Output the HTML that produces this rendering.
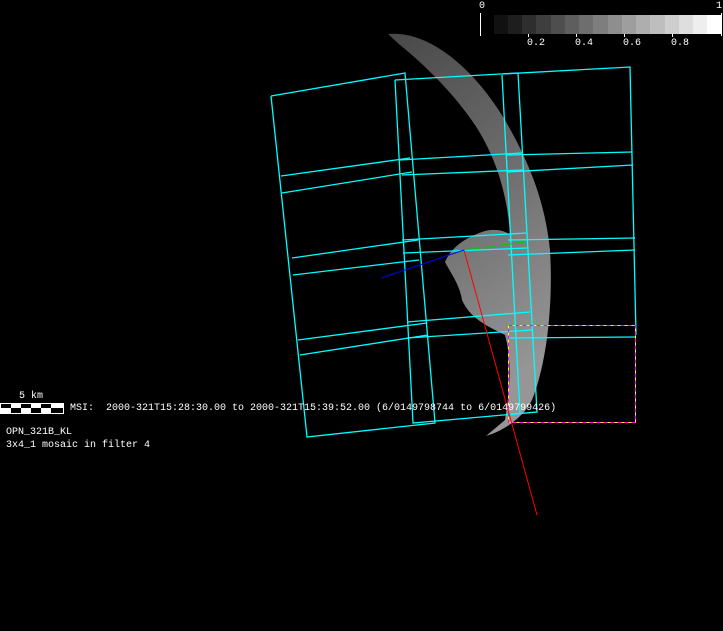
<!DOCTYPE html>
<html><head><style>
html,body{margin:0;padding:0;background:#000;width:723px;height:631px;overflow:hidden}
.t{position:absolute;color:#fff;font-family:"Liberation Mono",monospace;font-size:10px;line-height:12px;white-space:pre}
</style></head><body>
<svg width="723" height="631" style="position:absolute;left:0;top:0">
<defs><linearGradient id="g" x1="0" y1="0" x2="0.3" y2="1">
<stop offset="0" stop-color="#555"/><stop offset="0.5" stop-color="#808080"/><stop offset="1" stop-color="#b0b0b0"/></linearGradient></defs>
<g>
<rect x="494" y="15" width="15" height="19" fill="#111"/><rect x="508" y="15" width="15" height="19" fill="#1e1e1e"/>
<rect x="522" y="15" width="15" height="19" fill="#2e2e2e"/><rect x="536" y="15" width="15" height="19" fill="#3e3e3e"/>
<rect x="551" y="15" width="15" height="19" fill="#4e4e4e"/><rect x="565" y="15" width="15" height="19" fill="#5e5e5e"/>
<rect x="579" y="15" width="15" height="19" fill="#6e6e6e"/><rect x="593" y="15" width="15" height="19" fill="#7e7e7e"/>
<rect x="608" y="15" width="15" height="19" fill="#8e8e8e"/><rect x="622" y="15" width="15" height="19" fill="#9e9e9e"/>
<rect x="636" y="15" width="15" height="19" fill="#aeaeae"/><rect x="650" y="15" width="15" height="19" fill="#bebebe"/>
<rect x="665" y="15" width="15" height="19" fill="#cecece"/><rect x="679" y="15" width="15" height="19" fill="#dedede"/>
<rect x="693" y="15" width="15" height="19" fill="#eee"/><rect x="707" y="15" width="15" height="19" fill="#fff"/>
<line x1="480.5" y1="13" x2="480.5" y2="36" stroke="#fff"/><line x1="721.5" y1="13" x2="721.5" y2="36" stroke="#fff"/>
<g stroke="#fff"><line x1="528.5" y1="34" x2="528.5" y2="37"/><line x1="576.5" y1="34" x2="576.5" y2="37"/><line x1="624.5" y1="34" x2="624.5" y2="37"/><line x1="672.5" y1="34" x2="672.5" y2="37"/></g>
</g>
<path d="M388,34 C430,30 475,70 505,120 C528,160 545,200 550,250 C553,300 548,360 532,400 C522,420 500,432 486,436 L505,420 C510,390 512,360 505,335 C485,325 470,318 462,300 C460,285 450,272 445,262 C452,245 470,236 482,232 C492,228 505,230 510,235 C508,200 498,160 475,125 C455,95 425,65 400,45 Z" fill="url(#g)" opacity="0.85"/>
<g fill="none" stroke="#0ff" stroke-width="1.3">
<polyline points="271,96 405,73 435,423 307,437 271,96"/>
<line x1="281" y1="176" x2="410" y2="158"/><line x1="282" y1="193" x2="412" y2="172"/>
<line x1="292" y1="258" x2="418" y2="240"/><line x1="293" y1="275" x2="419" y2="260"/>
<line x1="298" y1="340" x2="427" y2="323"/><line x1="300" y1="355" x2="428" y2="335"/>
<polyline points="395,80 518,73 537,412 413,423 395,80"/>
<line x1="502" y1="75" x2="520" y2="413"/>
<line x1="400" y1="160" x2="522" y2="153"/><line x1="402" y1="175" x2="523" y2="170"/>
<line x1="402" y1="240" x2="527" y2="233"/><line x1="403" y1="253" x2="527" y2="248"/>
<line x1="407" y1="322" x2="530" y2="312"/><line x1="407" y1="338" x2="532" y2="330"/>
<polyline points="502,74 630,67 636,335"/>
<line x1="507" y1="155" x2="632" y2="152"/><line x1="507" y1="172" x2="633" y2="165"/>
<line x1="508" y1="240" x2="635" y2="238"/><line x1="508" y1="255" x2="635" y2="250"/>
<line x1="508" y1="338" x2="635" y2="337"/>
</g>
<rect x="508.5" y="325.5" width="127" height="97" fill="none" stroke="#ff0"/>
<rect x="508.5" y="325.5" width="127" height="97" fill="none" stroke="#f0f" stroke-dasharray="4,3"/>
<line x1="464" y1="250" x2="537" y2="515" stroke="#f00"/>
<line x1="381" y1="278" x2="464" y2="250" stroke="#00f"/>
<line x1="464" y1="250" x2="525" y2="242" stroke="#0c0"/>
<rect x="0" y="403" width="64" height="11" fill="#fff"/>
<g fill="#000"><rect x="1" y="404" width="10" height="4"/><rect x="21" y="404" width="10" height="4"/><rect x="41" y="404" width="10" height="4"/>
<rect x="11" y="408" width="10" height="5"/><rect x="31" y="408" width="10" height="5"/><rect x="51" y="408" width="12" height="5"/></g>
</svg>
<div class="t" style="left:479px;top:1px">0</div>
<div class="t" style="left:716px;top:1px">1</div>
<div class="t" style="left:527px;top:38px">0.2</div>
<div class="t" style="left:575px;top:38px">0.4</div>
<div class="t" style="left:623px;top:38px">0.6</div>
<div class="t" style="left:671px;top:38px">0.8</div>
<div class="t" style="left:19px;top:391px">5 km</div>
<div class="t" style="left:70px;top:403px">MSI:  2000-321T15:28:30.00 to 2000-321T15:39:52.00 (6/0149798744 to 6/0149799426)</div>
<div class="t" style="left:6px;top:427px">OPN_321B_KL</div>
<div class="t" style="left:6px;top:440px">3x4_1 mosaic in filter 4</div>
</body></html>
